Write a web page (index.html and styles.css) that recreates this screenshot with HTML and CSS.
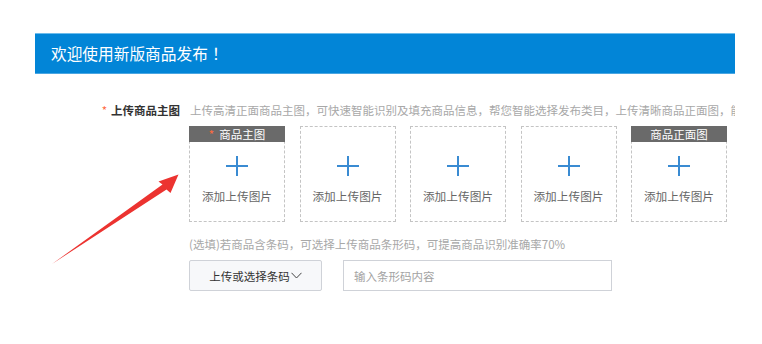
FILE: index.html
```html
<!DOCTYPE html>
<html lang="zh-CN">
<head>
<meta charset="utf-8">
<title>商品发布</title>
<link rel="stylesheet" href="styles.css">
</head>
<body>
<div class="page">
  <div class="banner">欢迎使用新版商品发布<span class="bang">！</span></div>
  <div class="form">
    <div class="label"><span class="req">*</span>上传商品主图</div>
    <div class="content">
      <div class="desc">上传高清正面商品主图，可快速智能识别及填充商品信息，帮您智能选择发布类目，上传清晰商品正面图，能提高识别准确率</div>
      <div class="boxes">
        <div class="box">
          <div class="tag"><span class="req">*</span>商品主图</div>
          <span class="plus"></span>
          <div class="add">添加上传图片</div>
        </div>
        <div class="box">
          <div class="tag empty"></div>
          <span class="plus"></span>
          <div class="add">添加上传图片</div>
        </div>
        <div class="box">
          <div class="tag empty"></div>
          <span class="plus"></span>
          <div class="add">添加上传图片</div>
        </div>
        <div class="box">
          <div class="tag empty"></div>
          <span class="plus"></span>
          <div class="add">添加上传图片</div>
        </div>
        <div class="box">
          <div class="tag">商品正面图</div>
          <span class="plus"></span>
          <div class="add">添加上传图片</div>
        </div>
      </div>
      <div class="hint">(选填)若商品含条码，可选择上传商品条形码，可提高商品识别准确率70%</div>
      <div class="barcode">
        <button class="btn">上传或选择条码<svg class="chev" width="11" height="7" viewBox="0 0 11 7"><path d="M0.5 0.8 L5.5 6 L10.5 0.8" fill="none" stroke="#444" stroke-width="1"/></svg></button>
        <div class="input">输入条形码内容</div>
      </div>
    </div>
  </div>
</div>
<svg class="arrow" width="762" height="344" viewBox="0 0 762 344">
  <polygon points="52,264 162.5,184.5 158.5,181.5 178.5,174.5 170.5,193 166.5,189.5" fill="#ec3330"/>
</svg>
</body>
</html>
```

FILE: styles.css
```css
html, body {
  margin: 0;
  padding: 0;
  background: #fff;
}
body {
  font-family: "Noto Sans CJK SC", "Noto Sans", sans-serif;
  font-size: 11.5px;
  color: #333;
  width: 762px;
  height: 344px;
  overflow: hidden;
  position: relative;
}
.page {
  padding: 33px 0 0 35px;
  width: 700px;
}
.banner {
  box-sizing: border-box;
  height: 41px;
  background: #0285d7;
  border-top: 1px solid #6cbcec;
  border-bottom: 1px solid #4aa6e2;
  color: #fff;
  font-size: 15.7px;
  padding: 0 0 0 16px;
  display: flex;
  align-items: center;
}
.bang {
  margin-left: 4px;
}
.form {
  margin-top: 28px;
  display: grid;
  grid-template-columns: 145px 1fr;
  column-gap: 9px;
}
.label {
  text-align: right;
  font-weight: bold;
  color: #333;
  line-height: 16px;
}
.req {
  color: #ff6a3d;
  font-weight: normal;
  margin-right: 4px;
}
.content {
  min-width: 0;
}
.desc {
  line-height: 16px;
  color: #a8a8a8;
  white-space: nowrap;
  overflow: hidden;
  padding-left: 1px;
}
.boxes {
  margin-top: 8px;
  display: flex;
  gap: 14.5px;
}
.box {
  box-sizing: border-box;
  width: 96px;
  height: 96px;
  border: 1px dashed #c4c4c4;
  display: flex;
  flex-direction: column;
  align-items: center;
}
.tag {
  align-self: stretch;
  margin: -1px -1px 0;
  height: 16px;
  background: #6a6a6a;
  color: #fff;
  line-height: 16px;
  text-align: center;
  font-size: 11.5px;
}
.tag.empty {
  background: transparent;
}
.tag .req {
  margin-right: 5px;
}
.plus {
  position: relative;
  width: 22px;
  height: 20px;
  margin-top: 14px;
}
.plus::before,
.plus::after {
  content: "";
  position: absolute;
  background: #3a8bd2;
}
.plus::before {
  left: 0;
  right: 0;
  top: 9px;
  height: 2px;
}
.plus::after {
  top: 0;
  bottom: 0;
  left: 10px;
  width: 2px;
}
.add {
  margin-top: 12px;
  line-height: 16px;
  color: #666;
  font-size: 11.7px;
}
.hint {
  margin-top: 14px;
  line-height: 16px;
  color: #a8a8a8;
}
.barcode {
  margin-top: 8px;
  display: flex;
  gap: 21px;
}
.btn {
  box-sizing: border-box;
  width: 133px;
  height: 31px;
  background: #f7f8fa;
  border: 1px solid #cfd2d8;
  border-radius: 2px;
  font-family: inherit;
  font-size: 11.5px;
  color: #333;
  display: flex;
  align-items: center;
  justify-content: center;
  padding: 0;
}
.chev {
  margin-left: 1px;
}
.input {
  box-sizing: border-box;
  width: 269px;
  height: 31px;
  border: 1px solid #cfd2d8;
  color: #a3a3a3;
  display: flex;
  align-items: center;
  padding-left: 10px;
}
.arrow {
  position: absolute;
  left: 0;
  top: 0;
  pointer-events: none;
}
```
